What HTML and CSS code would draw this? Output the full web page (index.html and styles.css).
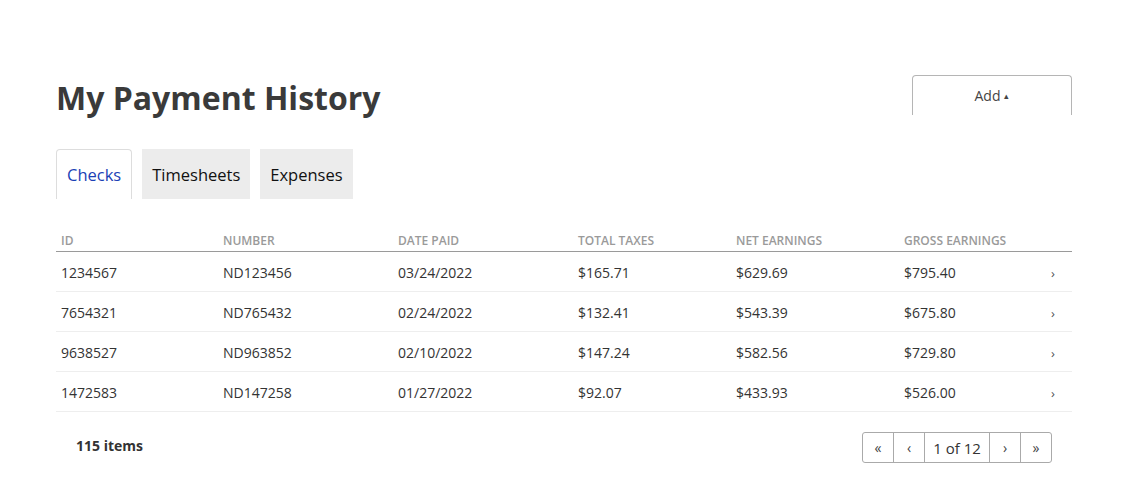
FILE: index.html
```html
<!DOCTYPE html>
<html>
<head>
<meta charset="utf-8">
<link rel="stylesheet" href="styles.css">
</head>
<body>
<div class="page">
  <div class="header">
    <h1 class="title">My Payment History</h1>
    <div class="add-btn">Add <span class="caret">&#9652;</span></div>
  </div>
  <div class="tabs">
    <div class="tab active">Checks</div>
    <div class="tab">Timesheets</div>
    <div class="tab">Expenses</div>
  </div>
  <div class="table">
    <div class="row head">
      <div>ID</div><div>Number</div><div>Date Paid</div><div>Total Taxes</div><div>Net Earnings</div><div>Gross Earnings</div><div></div>
    </div>
    <div class="row">
      <div>1234567</div><div>ND123456</div><div>03/24/2022</div><div>$165.71</div><div>$629.69</div><div>$795.40</div><div class="chev">&#8250;</div>
    </div>
    <div class="row">
      <div>7654321</div><div>ND765432</div><div>02/24/2022</div><div>$132.41</div><div>$543.39</div><div>$675.80</div><div class="chev">&#8250;</div>
    </div>
    <div class="row">
      <div>9638527</div><div>ND963852</div><div>02/10/2022</div><div>$147.24</div><div>$582.56</div><div>$729.80</div><div class="chev">&#8250;</div>
    </div>
    <div class="row">
      <div>1472583</div><div>ND147258</div><div>01/27/2022</div><div>$92.07</div><div>$433.93</div><div>$526.00</div><div class="chev">&#8250;</div>
    </div>
  </div>
  <div class="footer">
    <div class="count">115 items</div>
    <div class="pager">
      <div class="pg">&laquo;</div>
      <div class="pg">&lsaquo;</div>
      <div class="pg page-num">1 of 12</div>
      <div class="pg">&rsaquo;</div>
      <div class="pg">&raquo;</div>
    </div>
  </div>
</div>
</body>
</html>
```
FILE: styles.css
```css
* { box-sizing: border-box; }
body {
  margin: 0;
  font-family: "Open Sans", "Liberation Sans", sans-serif;
  color: #333;
  background: #fff;
}
.page {
  padding: 75px 55px 0 56px;
}
.header {
  display: flex;
  justify-content: space-between;
  align-items: flex-start;
  height: 40px;
}
.title {
  margin: 0;
  font-size: 32px;
  font-weight: 700;
  color: #3a3a3a;
  line-height: 46px;
}
.add-btn {
  width: 160px;
  height: 40px;
  border: 1px solid #b5b5b5;
  border-bottom: none;
  border-radius: 4px 4px 0 0;
  display: flex;
  align-items: center;
  justify-content: center;
  font-size: 14px;
  color: #444;
}
.caret {
  font-size: 9px;
  margin-left: 4px;
}
.tabs {
  display: flex;
  gap: 10px;
  margin-top: 34px;
}
.tab {
  height: 50px;
  padding: 0 10px;
  display: flex;
  align-items: center;
  font-size: 16.5px;
  background: #ececec;
  color: #111;
}
.tab.active {
  background: #fff;
  border: 1px solid #ddd;
  border-bottom: none;
  border-radius: 4px 4px 0 0;
  color: #1a3fb5;
}
.table {
  font-size: 14px;
}
.row {
  display: grid;
  grid-template-columns: 162px 175px 180px 158px 168px 1fr 32px;
  align-items: center;
  height: 40px;
  border-bottom: 1px solid #eee;
  padding-left: 5px;
  padding-top: 2px;
  color: #333;
}
.row.head {
  height: 53px;
  padding-top: 32px;
  padding-bottom: 1px;
  border-bottom: 1px solid #9a9a9a;
  font-size: 12px;
  font-weight: 600;
  text-transform: uppercase;
  color: #9a9a9a;
  line-height: 16px;
}
.chev {
  font-size: 13px;
  color: #555;
  padding-left: 11px;
}
.footer {
  display: flex;
  justify-content: space-between;
  align-items: center;
  margin-top: 20px;
  padding: 0 20px;
  height: 31px;
}
.count {
  font-size: 14px;
  font-weight: 700;
  color: #333;
  margin-bottom: 5px;
}
.pager {
  display: flex;
  border: 1px solid #aaa;
  border-radius: 3px;
  height: 31px;
}
.pg {
  width: 31px;
  display: flex;
  align-items: center;
  justify-content: center;
  font-size: 14px;
  color: #444;
  border-left: 1px solid #aaa;
}
.pg:first-child { border-left: none; width: 30px; }
.page-num {
  width: 65px;
  font-size: 15px;
  color: #333;
}
```
